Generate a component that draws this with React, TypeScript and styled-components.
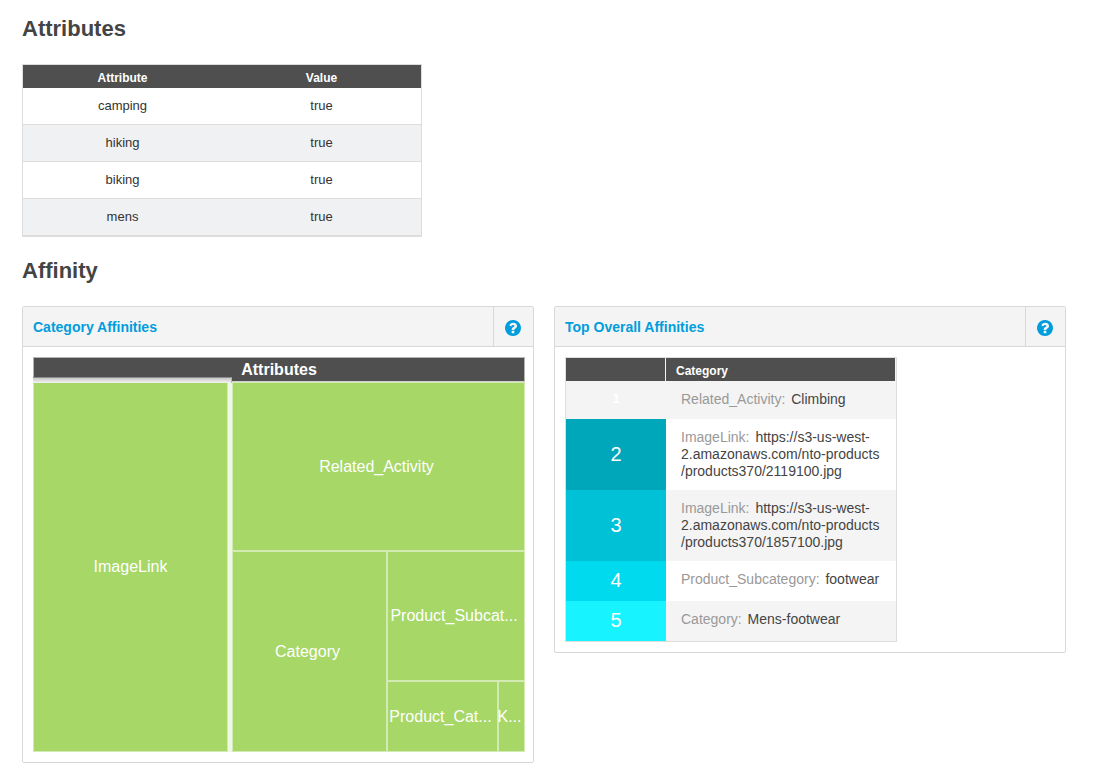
import React from 'react';
import styled, { createGlobalStyle } from 'styled-components';

const GlobalStyle = createGlobalStyle`
  *, *::before, *::after { box-sizing: border-box; }
  body {
    margin: 0;
    background: #fff;
    color: #444;
    font-family: "Liberation Sans", Arial, sans-serif;
  }
`;

const Page = styled.main`
  padding: 16px 41px 10px 22px;
`;

const SectionTitle = styled.h2`
  margin: 0 0 22px;
  font-size: 22px;
  line-height: 26px;
  font-weight: 700;
  color: #444;
`;

const AttributeTable = styled.table`
  width: 400px;
  max-width: 100%;
  margin-bottom: 21px;
  border: 1px solid #ddd;
  border-spacing: 0;
  table-layout: fixed;
  text-align: center;

  th {
    height: 23px;
    padding: 2px 0 0;
    background: #4f4f4f;
    color: #fff;
    font-size: 12px;
    line-height: 16px;
  }

  td {
    height: 37px;
    padding: 0;
    border-bottom: 1px solid #ddd;
    font-size: 13px;
    line-height: 16px;
    color: #333;
  }

  tbody tr:nth-child(even) td {
    background: #f0f1f2;
  }
`;

const Panels = styled.div`
  display: grid;
  grid-template-columns: repeat(2, minmax(0, 1fr));
  gap: 20px;
  align-items: start;
`;

const Panel = styled.section`
  border: 1px solid #d8d8d8;
  border-radius: 2px;
`;

const PanelHeader = styled.header`
  display: flex;
  align-items: center;
  justify-content: space-between;
  height: 40px;
  padding-left: 10px;
  background: #f4f4f4;
  border-bottom: 1px solid #d8d8d8;
`;

const PanelTitle = styled.h3`
  margin: 0;
  font-size: 14px;
  line-height: 18px;
  font-weight: 700;
  color: #009ddc;
`;

const HelpButton = styled.button`
  display: flex;
  align-items: center;
  justify-content: center;
  width: 40px;
  height: 39px;
  padding: 2px 1px 0 0;
  border: 0;
  border-left: 1px solid #d8d8d8;
  background: transparent;
  color: #009ddc;
  cursor: pointer;
`;

const PanelBody = styled.div`
  padding: 10px 8px 10px 10px;
`;

const TreemapHeader = styled.div`
  height: 25px;
  border: 1px solid #b4b4b4;
  border-bottom-color: #d0d0d0;
  background: #4f4f4f;
  color: #fff;
  font-size: 16px;
  line-height: 23px;
  font-weight: 700;
  text-align: center;
`;

const TreemapBody = styled.div`
  display: grid;
  grid-template-columns: 195fr 293fr;
  gap: 4px;
  height: 370px;
  background: #eff8e4;
`;

const Split = styled.div<{ $columns?: string; $rows?: string }>`
  display: grid;
  grid-template-columns: ${(p) => p.$columns ?? 'minmax(0, 1fr)'};
  grid-template-rows: ${(p) => p.$rows ?? 'minmax(0, 1fr)'};
`;

const Tile = styled.div<{ $active?: boolean }>`
  position: relative;
  display: flex;
  align-items: center;
  justify-content: center;
  min-width: 0;
  padding-right: ${(p) => (p.$active ? '0' : '4px')};
  border: 1px solid #d3ebb3;
  background: #a6d767;
  color: #fff;
  font-size: 16px;
  line-height: 20px;
  white-space: nowrap;

  ${(p) =>
    p.$active &&
    `
    &::before {
      content: '';
      position: absolute;
      top: -6px;
      left: -1px;
      right: -5px;
      height: 6px;
      border-top: 1px solid #8c8c8c;
      border-right: 1px solid #b4b4b4;
      background: linear-gradient(#c8c8c8, #f4f4f4);
    }
  `}
`;

const RankTable = styled.table`
  width: 332px;
  max-width: 100%;
  border: 1px solid #ddd;
  border-spacing: 0;
  table-layout: fixed;

  th {
    height: 23px;
    padding: 2px 10px 0;
    border-right: 1px solid #f4f4f4;
    background: #4f4f4f;
    color: #fff;
    font-size: 12px;
    line-height: 16px;
    text-align: left;
  }

  th:first-child {
    width: 100px;
  }

  tbody tr:nth-child(odd) {
    background: #f4f4f4;
  }
`;

const Rank = styled.td<{ $color?: string }>`
  height: ${(p) => (p.$color ? '40px' : '38px')};
  padding: 0 0 2px;
  background: ${(p) => p.$color ?? 'transparent'};
  color: #fff;
  font-size: ${(p) => (p.$color ? '20px' : '13px')};
  font-weight: ${(p) => (p.$color ? 400 : 700)};
  line-height: 20px;
  text-align: center;
`;

const Affinity = styled.td`
  padding: 10px 15px;
  font-size: 14px;
  line-height: 17px;
  vertical-align: top;
  color: #444;
`;

const AffinityLabel = styled.span`
  margin-right: 2px;
  color: #999;
`;

const Chunk = styled.span`
  white-space: nowrap;
`;

const attributes = ['camping', 'hiking', 'biking', 'mens'];

/* Values are stored as unbreakable chunks; a line may only wrap between two of them. */
const affinities: { label: string; value: string[]; color?: string }[] = [
  { label: 'Related_Activity', value: ['Climbing'] },
  {
    label: 'ImageLink',
    value: ['https://s3-us-west-', '2.amazonaws.com/nto-products', '/products370/2119100.jpg'],
    color: '#00a7ba',
  },
  {
    label: 'ImageLink',
    value: ['https://s3-us-west-', '2.amazonaws.com/nto-products', '/products370/1857100.jpg'],
    color: '#00c1d5',
  },
  { label: 'Product_Subcategory', value: ['footwear'], color: '#00daee' },
  { label: 'Category', value: ['Mens-footwear'], color: '#17f4ff' },
];

function PanelHead({ title }: { title: string }) {
  return (
    <PanelHeader>
      <PanelTitle>{title}</PanelTitle>
      <HelpButton type="button" aria-label={`Help: ${title}`}>
        <svg width="16" height="16" viewBox="128 128 1536 1536" fill="currentColor" aria-hidden="true">
          <path d="M1024 1376v-192q0-14-9-23t-23-9h-192q-14 0-23 9t-9 23v192q0 14 9 23t23 9h192q14 0 23-9t9-23zm256-672q0-88-55.5-163t-138.5-116-170-41q-243 0-371 213-15 24 8 42l132 100q7 6 19 6 16 0 25-12 53-68 86-92 34-24 86-24 48 0 85.5 26t37.5 59q0 38-20 61t-68 45q-63 28-115.5 86.5t-52.5 125.5v36q0 14 9 23t23 9h192q14 0 23-9t9-23q0-19 21.5-49.5t54.5-49.5q32-18 49-28.5t46-35 44.5-48 28-60.5 12.5-81zm384 192q0 209-103 385.5t-279.5 279.5-385.5 103-385.5-103-279.5-279.5-103-385.5 103-385.5 279.5-279.5 385.5-103 385.5 103 279.5 279.5 103 385.5z" />
        </svg>
      </HelpButton>
    </PanelHeader>
  );
}

export default function App() {
  return (
    <>
      <GlobalStyle />
      <Page>
        <SectionTitle>Attributes</SectionTitle>
        <AttributeTable>
          <thead>
            <tr>
              <th scope="col">Attribute</th>
              <th scope="col">Value</th>
            </tr>
          </thead>
          <tbody>
            {attributes.map((name) => (
              <tr key={name}>
                <td>{name}</td>
                <td>true</td>
              </tr>
            ))}
          </tbody>
        </AttributeTable>

        <SectionTitle>Affinity</SectionTitle>
        <Panels>
          <Panel>
            <PanelHead title="Category Affinities" />
            <PanelBody>
              <TreemapHeader>Attributes</TreemapHeader>
              <TreemapBody>
                <Tile $active>ImageLink</Tile>
                <Split $rows="169fr 201fr">
                  <Tile>Related_Activity</Tile>
                  <Split $columns="155fr 138fr">
                    <Tile>Category</Tile>
                    <Split $rows="130fr 71fr">
                      <Tile>Product_Subcat...</Tile>
                      <Split $columns="minmax(0, 111fr) minmax(0, 27fr)">
                        <Tile>Product_Cat...</Tile>
                        <Tile>K...</Tile>
                      </Split>
                    </Split>
                  </Split>
                </Split>
              </TreemapBody>
            </PanelBody>
          </Panel>

          <Panel>
            <PanelHead title="Top Overall Affinities" />
            <PanelBody>
              <RankTable>
                <thead>
                  <tr>
                    <th scope="col" aria-label="Rank" />
                    <th scope="col">Category</th>
                  </tr>
                </thead>
                <tbody>
                  {affinities.map((item, i) => (
                    <tr key={i}>
                      <Rank $color={item.color}>{i + 1}</Rank>
                      <Affinity>
                        <AffinityLabel>{item.label}:</AffinityLabel>{' '}
                        {item.value.map((chunk, n) => (
                          <React.Fragment key={n}>
                            {n > 0 && <wbr />}
                            <Chunk>{chunk}</Chunk>
                          </React.Fragment>
                        ))}
                      </Affinity>
                    </tr>
                  ))}
                </tbody>
              </RankTable>
            </PanelBody>
          </Panel>
        </Panels>
      </Page>
    </>
  );
}
